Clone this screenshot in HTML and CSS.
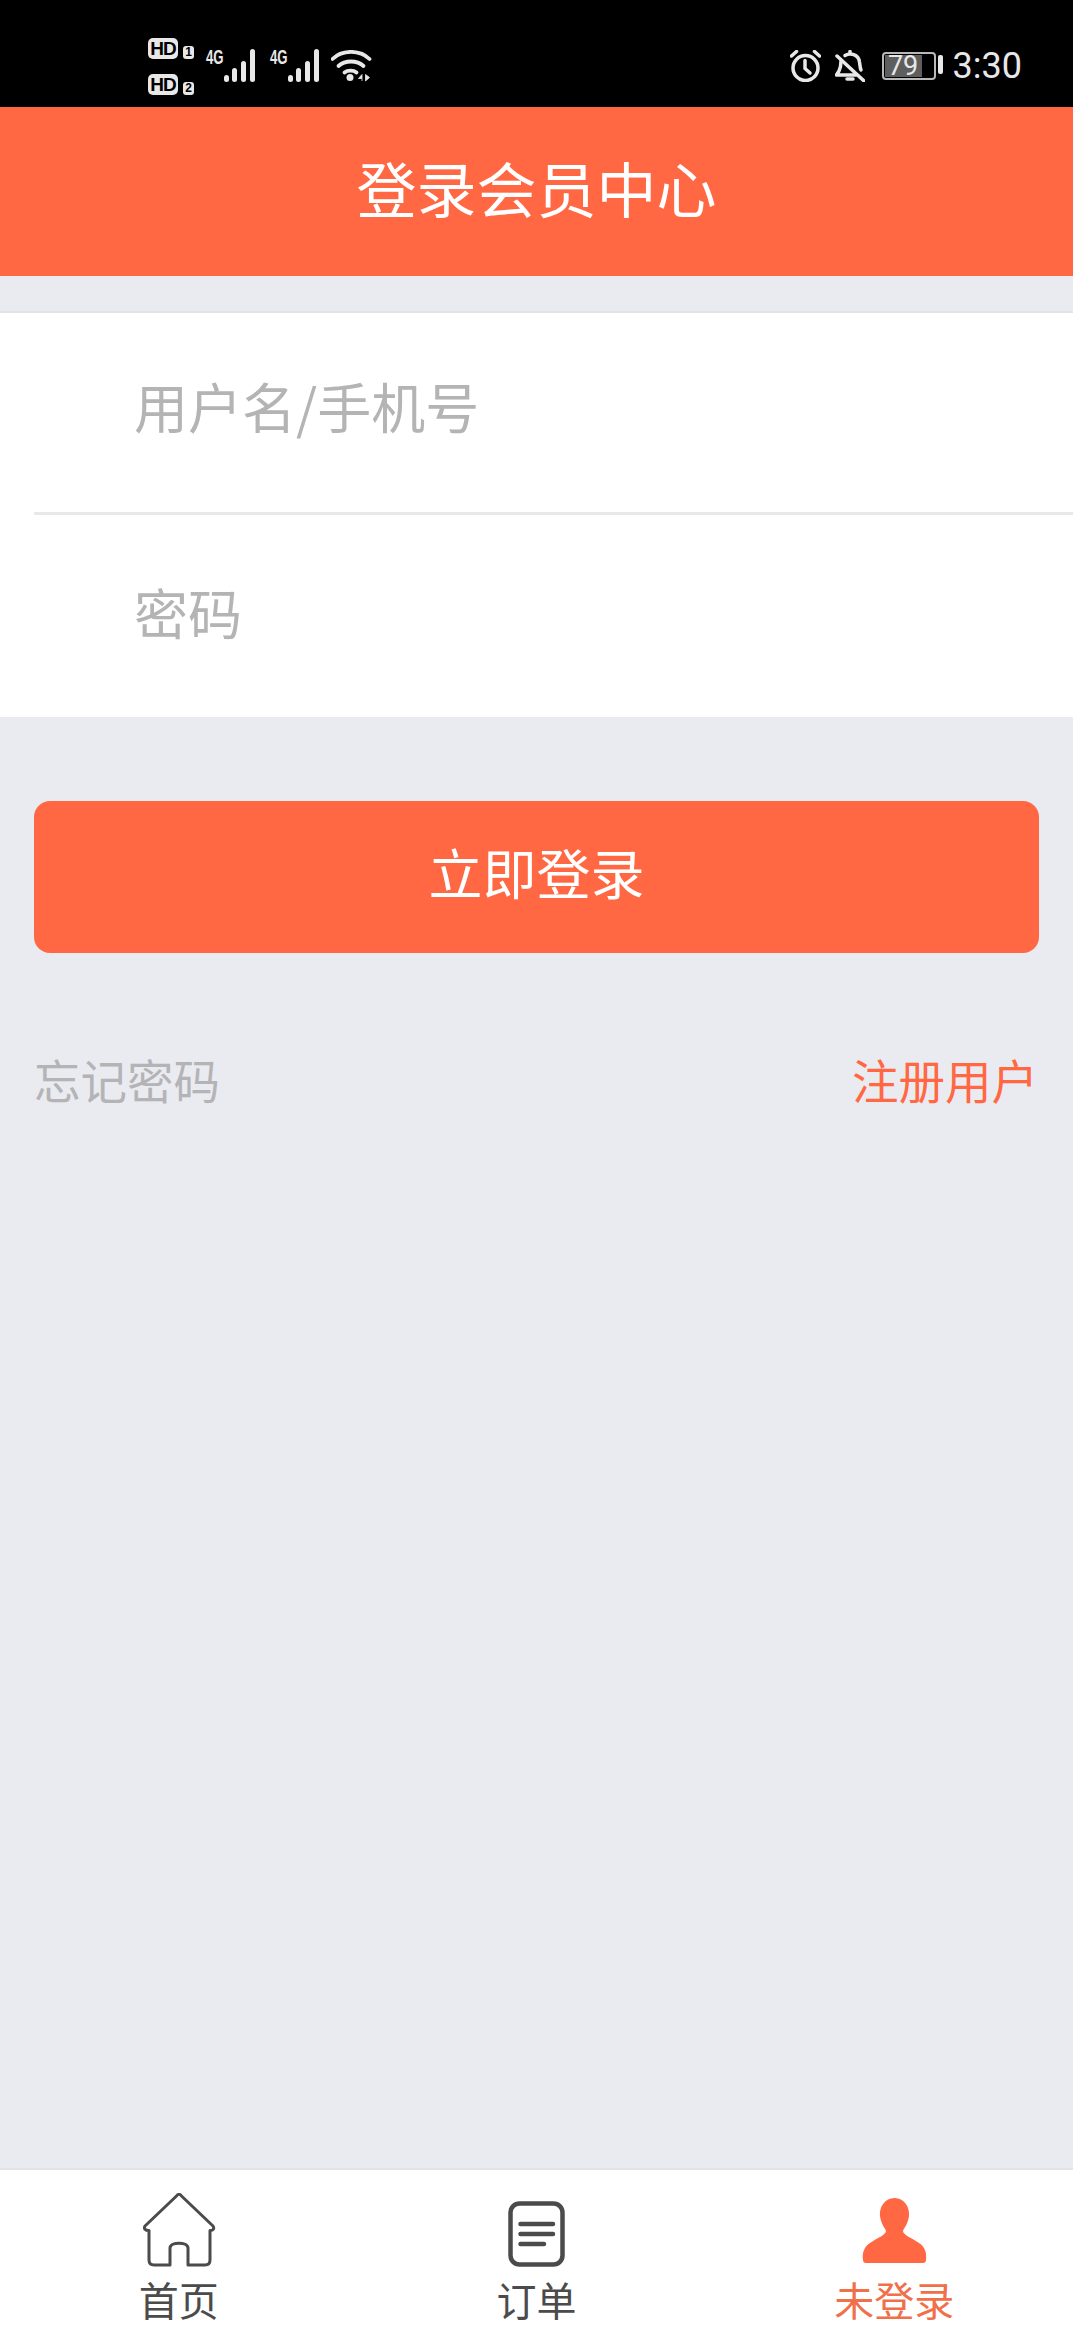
FILE: index.html
```html
<!DOCTYPE html>
<html lang="zh">
<head>
<meta charset="utf-8">
<title>登录会员中心</title>
<link rel="stylesheet" href="styles.css">
</head>
<body>
<div class="app">
  <div class="status">
    <div class="status-left">
      <div class="sims">
        <div class="sim sim-one"><span class="hd">HD</span><span class="num">1</span></div>
        <div class="sim sim-two"><span class="hd">HD</span><span class="num">2</span></div>
      </div>
      <svg class="signal" viewBox="0 0 52 33"><text class="net" transform="translate(0 15) scale(.66 1)">4G</text><g fill="#e8e8e8"><rect x="18" y="26" width="5" height="7" rx="2.5"/><rect x="26" y="19" width="5" height="14" rx="2.5"/><rect x="35" y="12" width="5" height="21" rx="2.5"/><rect x="44" y="0" width="5" height="33" rx="2.5"/></g></svg>
      <svg class="signal signal-two" viewBox="0 0 52 33"><text class="net" transform="translate(0 15) scale(.66 1)">4G</text><g fill="#e8e8e8"><rect x="18" y="26" width="5" height="7" rx="2.5"/><rect x="26" y="19" width="5" height="14" rx="2.5"/><rect x="35" y="12" width="5" height="21" rx="2.5"/><rect x="44" y="0" width="5" height="33" rx="2.5"/></g></svg>
      <svg class="wifi" viewBox="0 0 41 32"><g fill="none" stroke="#e8e8e8" stroke-width="3.8" stroke-linecap="round"><path d="M1.500 9C11 -0.500 29 -0.500 38.500 9"/><path d="M7.500 16C14 10 26 10 32.500 16"/><path d="M13.500 22.500C16.500 20 22.500 20 25.500 22.500"/></g><circle cx="19" cy="27.500" r="3.500" fill="#e8e8e8"/><path d="M31 31V24.500L27.500 28.500H31M34.500 24.500V31L38.500 27.500Z" fill="#e8e8e8" stroke="#e8e8e8" stroke-width=".8"/></svg>
    </div>
    <div class="status-right">
      <svg class="alarm" viewBox="0 0 31 32" fill="none" stroke="#e8e8e8" stroke-width="3.500" stroke-linecap="round" stroke-linejoin="round"><circle cx="15.500" cy="18" r="12.500"/><path d="M15 10.500V18.500L20 23"/><path d="M1.500 6L6.500 1.500M29.500 6L24.500 1.500"/></svg>
      <svg class="bell" viewBox="0 0 30 32" fill="none" stroke="#e8e8e8" stroke-width="3.500" stroke-linecap="round" stroke-linejoin="round"><path d="M6 11C6 13 5.500 18 4 21L1.500 25H21"/><path d="M10 5.500C15 2.500 23.500 4 24.500 12C25 15 25 18 26 20"/><path d="M15 3V1.500"/><path d="M12 29H18"/><path d="M2 6L29 31"/></svg>
      <div class="battery"><span class="level">79</span></div>
      <span class="tip"></span>
      <span class="time">3:30</span>
    </div>
  </div>

  <header class="topbar">登录会员中心</header>

  <main class="main">
    <div class="form">
      <div class="field">用户名/手机号</div>
      <div class="rule"></div>
      <div class="field field-last">密码</div>
    </div>
    <div class="submit">立即登录</div>
    <div class="links">
      <span class="forgot">忘记密码</span>
      <span class="register">注册用户</span>
    </div>
  </main>

  <nav class="tabs">
    <div class="tab">
      <div class="tab-icon">
        <svg class="ico-home" viewBox="0 0 74 74" fill="none" stroke="#4b4b4b" stroke-width="3" stroke-linejoin="round"><path d="M34.500 3C36 0.800 38 0.800 39.500 3L71 33C72.500 35.500 71.500 37.500 68 37.500V67C68 70.500 66 72 63 72H46V55C46 48.500 28 48.500 28 55V72H12C9 72 7 70.500 7 67V37.500C3 37.500 1.500 35.500 3 33Z"/></svg>
      </div>
      <span class="tab-label">首页</span>
    </div>
    <div class="tab">
      <div class="tab-icon">
        <svg class="ico-doc" viewBox="0 0 57 66" fill="none" stroke="#4b4b4b" stroke-width="4.500" stroke-linecap="round"><rect x="2.500" y="2.500" width="52" height="61" rx="9"/><path d="M12.500 23H45M12.500 33H45M12.500 43H36"/></svg>
      </div>
      <span class="tab-label">订单</span>
    </div>
    <div class="tab tab-active">
      <div class="tab-icon">
        <svg class="ico-user" viewBox="0 0 65 65"><path fill="#ff6843" d="M32.500 0C42 0 48 9 47 18C46 26 42 30 41 33C41 37 50 40 57 45C63 49 65 55 64 62Q63.800 65 61 65H4Q1.200 65 1 62C0 55 2 49 8 45C15 40 24 37 24 33C23 30 19 26 18 18C17 9 23 0 32.500 0Z"/></svg>
      </div>
      <span class="tab-label">未登录</span>
    </div>
  </nav>
</div>
</body>
</html>
```

FILE: styles.css
```css
* { box-sizing: border-box; }
html, body { margin: 0; padding: 0; }
body {
  font-family: "Noto Sans CJK SC", "Noto Sans", "Liberation Sans", sans-serif;
  background: #eaebf0;
}
.app {
  width: 1073px;
  height: 2333px;
  display: flex;
  flex-direction: column;
  overflow: hidden;
}

/* status bar */
.status {
  flex: 0 0 107px;
  background: #000;
  display: flex;
  justify-content: space-between;
  color: #e8e8e8;
}
.status-left {
  display: flex;
  align-items: flex-start;
  padding: 38px 0 0 148px;
}
.sims { display: flex; flex-direction: column; gap: 15px; margin-right: 12px; }
.sim { display: flex; align-items: flex-end; gap: 5px; height: 21px; }
.hd {
  width: 30px;
  height: 21px;
  border-radius: 5px;
  background: #e8e8e8;
  color: #000;
  font: bold 19px/21px "Liberation Sans", sans-serif;
  letter-spacing: -1px;
  text-align: center;
}
.num {
  width: 11px;
  height: 13px;
  border-radius: 3px;
  background: #e8e8e8;
  color: #000;
  font: bold 12px/13px "Liberation Sans", sans-serif;
  text-align: center;
}
.signal { width: 52px; height: 33px; margin-top: 11px; overflow: visible; }
.signal-two { margin-left: 12px; }
.net { font: bold 20px "Liberation Sans", sans-serif; fill: #e8e8e8; }
.wifi { width: 41px; height: 32px; margin: 12px 0 0 9px; }
.status-right {
  display: flex;
  align-items: flex-start;
  padding: 50px 0 0 0;
  margin-right: 51px;
}
.alarm { width: 31px; height: 32px; }
.bell { width: 30px; height: 32px; margin-left: 14px; }
.battery {
  width: 54px;
  height: 28px;
  margin: 2px 0 0 17px;
  border: 2px solid #b8b8b8;
  border-radius: 4px;
  padding: 1px;
}
.level {
  display: block;
  width: 37px;
  height: 22px;
  background: #5e5e5e;
  color: #e8e8e8;
  font: 27px/22px "Roboto", sans-serif;
  text-align: center;
}
.tip {
  width: 5px;
  height: 19px;
  margin: 5px 0 0 2px;
  border-radius: 2px;
  background: #e8e8e8;
}
.time {
  margin-left: 10px;
  font: 36px/32px "Roboto", sans-serif;
  color: #e8e8e8;
}

/* header */
.topbar {
  flex: 0 0 169px;
  background: #ff6843;
  color: #fff;
  font-size: 60px;
  line-height: 160px;
  text-align: center;
}

/* form */
.main { flex: 1; background: #eaebf0; padding-top: 35px; }
.form {
  background: #fff;
  border-top: 2px solid #e3e3e6;
}
.field {
  height: 199px;
  padding-left: 134px;
  font-size: 54px;
  line-height: 186px;
  color: #b4b4b4;
}
.field-last { height: 202px; line-height: 194px; }
.rule { height: 3px; margin-left: 34px; background: #e8e8ea; }
.submit {
  height: 152px;
  margin: 84px 34px 0;
  border-radius: 16px;
  background: #ff6843;
  color: #fff;
  font-size: 54px;
  line-height: 142px;
  text-align: center;
}
.links {
  display: flex;
  justify-content: space-between;
  margin-top: 95px;
  padding: 0 35px 0 34px;
  font-size: 46.500px;
  line-height: 62px;
}
.forgot { color: #b4b4b6; }
.register { color: #ff6843; }

/* tabs */
.tabs {
  flex: 0 0 165px;
  display: flex;
  background: #fff;
  border-top: 2px solid #e3e3e6;
  padding-top: 23px;
}
.tab {
  flex: 1;
  display: flex;
  flex-direction: column;
  align-items: center;
  color: #4b4b4b;
}
.tab-icon {
  height: 74px;
  display: flex;
  align-items: flex-end;
}
.ico-home { width: 74px; height: 74px; display: block; }
.ico-doc { width: 57px; height: 66px; display: block; }
.ico-user { width: 65px; height: 65px; display: block; margin-bottom: 4px; }
.tab-label {
  margin-top: 7px;
  font-size: 40px;
  line-height: 50px;
}
.tab-active { color: #f0704a; }
```
